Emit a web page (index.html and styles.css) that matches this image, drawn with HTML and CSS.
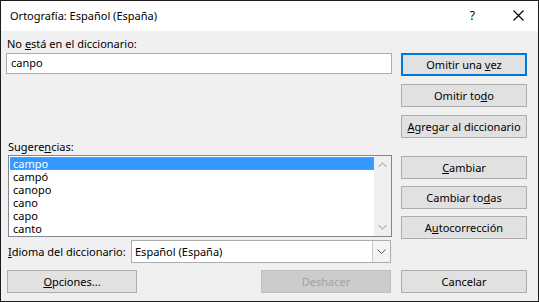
FILE: index.html
```html
<!DOCTYPE html>
<html lang="es">
<head>
    <meta charset="UTF-8">
    <title>Ortografía: Español (España)</title>
    <link rel="stylesheet" href="styles.css">
</head>
<body>
    <div class="window">
        <div class="titlebar">
            <span class="title">Ortografía: Español (España)</span>
            <span class="help">?</span>
            <svg class="close" width="11" height="11" viewBox="0 0 11 11">
                <path d="M0.5 0.5 L10.5 10.5 M10.5 0.5 L0.5 10.5" stroke="#000" stroke-width="1.1" fill="none"/>
            </svg>
        </div>
        <div class="content">
            <div class="main">
                <div class="left">
                    <div class="label first">No <u>e</u>stá en el diccionario:</div>
                    <div class="input">canpo</div>
                    <div class="label sugg">Sugere<u>n</u>cias:</div>
                    <div class="listbox">
                        <div class="items">
                            <div class="item selected">campo</div>
                            <div class="item">campó</div>
                            <div class="item">canopo</div>
                            <div class="item">cano</div>
                            <div class="item">capo</div>
                            <div class="item">canto</div>
                        </div>
                        <div class="scrollbar">
                            <svg width="9" height="6" viewBox="0 0 9 6"><path d="M0.5 5 L4.5 1 L8.5 5" stroke="#c2c2c2" stroke-width="1.6" fill="none"/></svg>
                            <svg width="9" height="6" viewBox="0 0 9 6"><path d="M0.5 1 L4.5 5 L8.5 1" stroke="#c2c2c2" stroke-width="1.6" fill="none"/></svg>
                        </div>
                    </div>
                    <div class="lang-row">
                        <span class="lang-label"><u>I</u>dioma del diccionario:</span>
                        <div class="select">
                            <span class="select-value">Español (España)</span>
                            <span class="select-arrow">
                                <svg width="9" height="5" viewBox="0 0 9 5"><path d="M0.5 0.5 L4.5 4.5 L8.5 0.5" stroke="#555" stroke-width="1" fill="none"/></svg>
                            </span>
                        </div>
                    </div>
                </div>
                <div class="right">
                    <div class="btn focused"><span>Omitir una <u>v</u>ez</span></div>
                    <div class="btn"><span>Omitir to<u>d</u>o</span></div>
                    <div class="btn"><span><u>A</u>gregar al diccionario</span></div>
                    <div class="btn group"><span><u>C</u>ambiar</span></div>
                    <div class="btn"><span>Cambiar to<u>d</u>as</span></div>
                    <div class="btn"><span>A<u>u</u>tocorrección</span></div>
                </div>
            </div>
            <div class="footer">
                <div class="btn opciones"><span><u>O</u>pciones...</span></div>
                <div class="btn disabled"><span>Deshacer</span></div>
                <div class="btn cancel"><span>Cancelar</span></div>
            </div>
        </div>
    </div>
</body>
</html>
```

FILE: styles.css
```css
* {
    box-sizing: border-box;
}
body {
    margin: 0;
    font-family: "Noto Sans", "Open Sans", sans-serif;
    font-size: 11px;
    color: #000;
}
.window {
    width: 539px;
    height: 302px;
    border: 1px solid #1c1c1c;
    background: #f0f0f0;
    overflow: hidden;
}
.titlebar {
    height: 30px;
    background: #fff;
    display: flex;
    align-items: center;
    padding: 0 14px 0 9px;
}
.title {
    flex: 1;
    padding-bottom: 2px;
}
.help {
    font-size: 12px;
    margin-right: 38px;
    padding-bottom: 2px;
}
.close {
    margin-bottom: 2px;
}
.content {
    padding: 0 11px 0 5px;
}
.main {
    display: flex;
    justify-content: space-between;
}
.left {
    width: 386px;
}
.label {
    line-height: 16px;
    padding-left: 1px;
}
.label.first {
    margin-top: 5px;
}
.label.sugg {
    margin-top: 65px;
    padding-left: 2px;
}
.input {
    height: 21px;
    margin-top: 1px;
    background: #fff;
    border: 1px solid #adadad;
    line-height: 18px;
    padding-left: 4px;
}
.listbox {
    margin-left: 2px;
    height: 82px;
    width: 384px;
    background: #fff;
    border: 1px solid #828790;
    display: flex;
    padding: 1px 0 1px 1px;
}
.items {
    flex: 1;
}
.item {
    line-height: 13px;
    height: 13px;
    padding-left: 3px;
}
.item.selected {
    background: #3399ff;
    color: #fff;
    outline: 1px dotted #e08a3a;
    outline-offset: -1px;
}
.scrollbar {
    width: 17px;
    background: #f0f0f0;
    display: flex;
    flex-direction: column;
    justify-content: space-between;
    align-items: center;
    padding: 6px 0 6px;
    margin: -1px 0 -1px 0;
}
.lang-row {
    display: flex;
    align-items: center;
    margin-top: 3px;
    padding-left: 2px;
}
.lang-label {
    width: 123px;
    white-space: nowrap;
}
.select {
    width: 260px;
    height: 23px;
    background: #fff;
    border: 1px solid #adadad;
    display: flex;
    align-items: center;
}
.select-value {
    flex: 1;
    padding-left: 3px;
}
.select-arrow {
    width: 18px;
    height: 21px;
    border-left: 1px solid #c8c8c8;
    background: #f4f4f4;
    display: flex;
    align-items: center;
    justify-content: center;
}
.right {
    width: 126px;
    padding-top: 22px;
}
.btn {
    height: 23px;
    background: #e1e1e1;
    border: 1px solid #adadad;
    display: flex;
    align-items: center;
    justify-content: center;
    margin-bottom: 8px;
    white-space: nowrap;
}
.btn.focused {
    border: 2px solid #0078d7;
}
.btn.group {
    margin-top: 18px;
}
.right .btn:nth-child(n+4) {
    margin-bottom: 7px;
}
.footer {
    display: flex;
    margin-top: 7px;
}
.footer .btn {
    width: 130px;
    margin-bottom: 0;
}
.opciones {
    margin-left: 1px;
}
.disabled {
    margin-left: 124px;
    background: #cccccc;
    border-color: #bfbfbf;
    color: #a3a3a3;
}
.cancel {
    margin-left: 10px;
    width: 126px !important;
}
```
